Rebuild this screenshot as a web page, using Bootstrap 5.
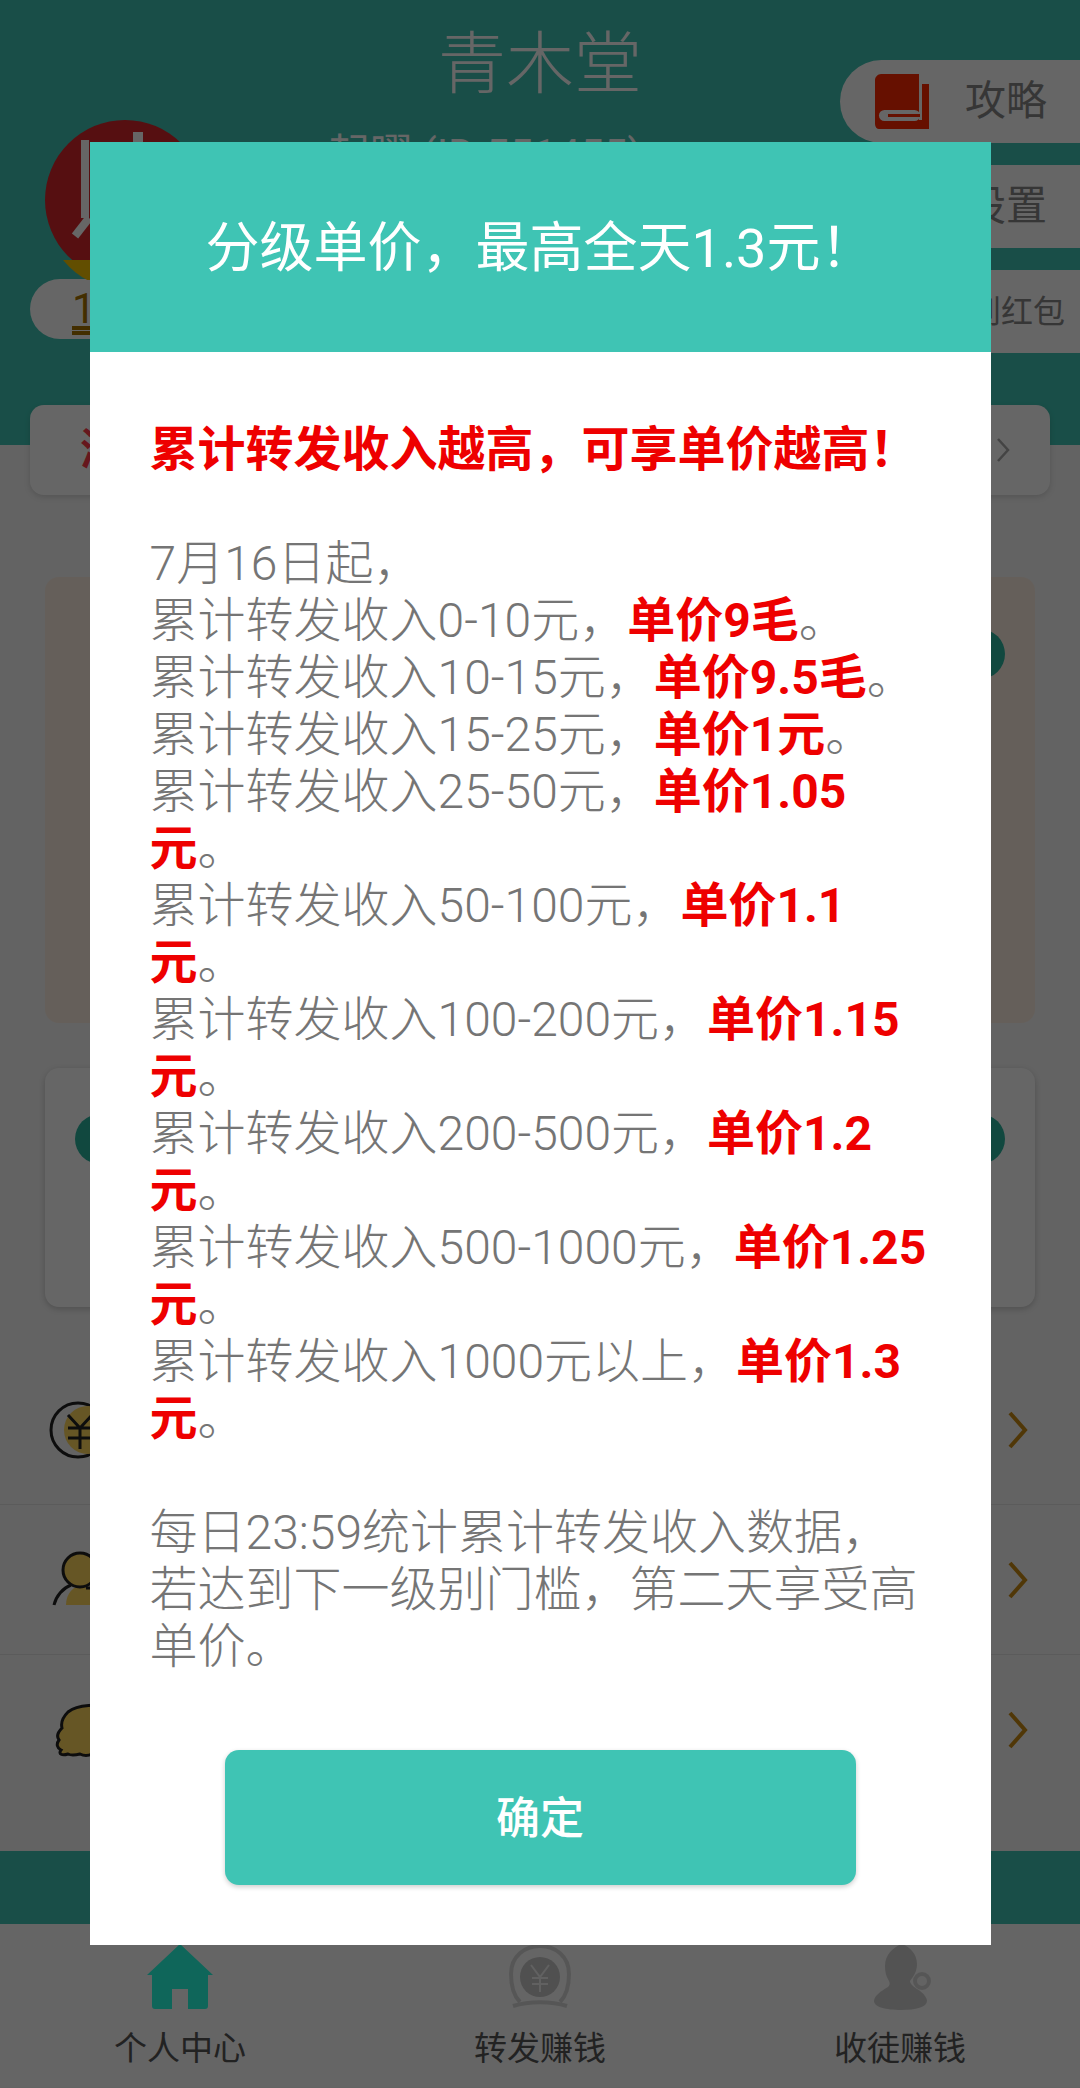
<!DOCTYPE html>
<html lang="zh-CN">
<head>
  <meta charset="UTF-8" />
  <meta name="viewport" content="width=device-width, initial-scale=1.0"/>
  <title>青木堂</title>
  <link href="https://cdn.jsdelivr.net/npm/bootstrap@5.3.3/dist/css/bootstrap.min.css" rel="stylesheet"/>
  <style>
    html, body {
      height: 2088px;
      overflow: hidden;
    }
    body {
      font-family: Roboto, "Noto Sans CJK SC", sans-serif;
      background: #f7f7f7;
      color: #888;
    }
    .app {
      height: 2088px;
    }

    /* top area */
    .top-bar {
      height: 445px;
      background: #3fc4b4;
      display: grid;
      grid-template-columns: 300px 480px 300px;
    }
    .top-left {
      padding: 120px 0 0 30px;
    }
    .avatar {
      display: block;
      width: 160px;
      height: 160px;
      margin-left: 15px;
      margin-bottom: -1px;
    }
    .level-pill {
      width: 200px;
      height: 60px;
      padding-left: 42px;
      background: #fff;
      border-radius: 30px;
      font-size: 42px;
      line-height: 60px;
      color: #a87400;
      text-decoration: underline double;
    }
    .top-mid {
      padding-top: 20px;
      text-align: center;
    }
    .shop-name {
      font-size: 68px;
      font-weight: 300;
      line-height: 90px;
      color: #fff;
    }
    .user-id {
      margin-top: 20px;
      padding-right: 110px;
      font-size: 42px;
      line-height: 50px;
      color: #fff;
      white-space: nowrap;
    }
    .top-right {
      padding-top: 60px;
    }
    .side-pill {
      height: 83px;
      margin-bottom: 22px;
      padding-right: 33px;
      margin-left: 60px;
      background: #fff;
      border-radius: 42px 0 0 42px;
      font-size: 41px;
    }
    .side-pill.tiny {
      font-size: 32px;
      padding-right: 15px;
    }
    .side-pill svg {
      width: 54px;
      height: 55px;
      margin-right: 36px;
    }

    /* content below the top area */
    .notice-bar {
      height: 90px;
      margin: -40px 30px 0;
      padding: 0 40px 0 50px;
      background: #fff;
      border-radius: 14px;
      color: #ff3b4a;
      font-size: 44px;
      font-weight: 700;
      position: relative;
      box-shadow: 0 2px 6px rgba(0, 0, 0, 0.15);
    }
    .panel-one,
    .panel-two {
      margin: 0 45px;
      border-radius: 14px;
    }
    .panel-one {
      height: 446px;
      margin-top: 82px;
      padding: 52px 30px 0;
      background: #fdeee2;
    }
    .panel-two {
      height: 239px;
      margin-top: 45px;
      padding: 46px 30px 0;
      background: #fff;
      box-shadow: 0 2px 6px rgba(0, 0, 0, 0.2);
    }
    .bar-one,
    .bar-two {
      height: 50px;
      border-radius: 25px;
      background: #2bb39f;
    }
    .bar-one {
      margin-left: auto;
      width: 120px;
    }
    .menu-list {
      margin-top: 48px;
    }
    .menu-row {
      height: 150px;
      padding: 0 52px 0 48px;
      border-bottom: 1px solid #e4e4e4;
    }
    .menu-row:last-child {
      border-bottom: 0;
    }
    .menu-row .lead-icon {
      width: 64px;
      height: 64px;
    }
    .menu-row .go-icon {
      width: 20px;
      height: 38px;
    }
    .teal-strip {
      height: 73px;
      margin-top: 46px;
      background: #3fc4b4;
    }

    /* tab bar */
    .tab-bar {
      height: 163px;
      background: #fcfcfc;
    }
    .tab-item {
      width: 360px;
      padding-top: 20px;
      text-align: center;
      font-size: 33px;
      line-height: 44px;
      color: #555;
    }
    .tab-item svg {
      display: block;
      height: 66px;
      width: 66px;
      margin: 0 auto 17px;
    }

    /* dialog */
    .dialog-mask {
      z-index: 10;
      padding-top: 142px;
      background: rgba(0, 0, 0, 0.6);
    }
    .dialog-box {
      width: 901px;
      height: 1803px;
      background: #fff;
    }
    .dialog-head {
      height: 210px;
      padding-top: 3px;
      background: #3fc4b4;
      color: #fff;
      font-size: 54px;
      font-weight: 400;
    }
    .dialog-text {
      padding: 69px 60px 0;
      font-size: 48px;
      line-height: 57px;
      font-weight: 300;
      color: #757575;
    }
    .dialog-text b {
      font-weight: 700;
      color: #ee0000;
    }
    .dialog-foot {
      padding-bottom: 60px;
    }
    .btn-confirm {
      width: 631px;
      height: 135px;
      padding-top: 8px;
      background: #3fc4b4;
      border: 0;
      border-radius: 14px;
      color: #fff;
      font-size: 44px;
      font-weight: 500;
      box-shadow: 0 2px 5px rgba(0, 0, 0, 0.2);
    }
  </style>
</head>
<body>
  <div class="app position-relative d-flex flex-column">

    <!-- top area -->
    <header class="top-bar">
      <div class="top-left">
        <svg class="avatar" viewBox="0 0 160 160">
          <circle cx="80" cy="80" r="80" fill="#d8262b"/>
          <path d="M18 140a80 80 0 0 0 124 0z" fill="#f5c400"/>
          <rect x="36" y="20" width="8" height="78" fill="#fff"/>
          <path d="M44 98L30 116" stroke="#fff" stroke-width="8"/>
          <rect x="88" y="12" width="10" height="12" fill="#fff"/>
        </svg>
        <div class="level-pill">1</div>
      </div>
      <div class="top-mid">
        <div class="shop-name">青木堂</div>
        <div class="user-id">起曜 (ID:551455)</div>
      </div>
      <div class="top-right">
        <div class="side-pill d-flex align-items-center justify-content-end">
          <svg viewBox="0 0 54 55">
            <path fill="#ff2a00" d="M6 0h38v46H0V6c0-3 3-6 6-6zM47 10h7v45H4c-2 0-4-2-4-5v-4h47z"/>
            <rect x="4" y="36" width="41" height="11" rx="5.5" fill="#fff"/>
            <rect x="13" y="40" width="32" height="3" fill="#ff2a00"/>
          </svg>
          攻略
        </div>
        <div class="side-pill d-flex align-items-center justify-content-end">设置</div>
        <div class="side-pill tiny d-flex align-items-center justify-content-end">签到红包</div>
      </div>
    </header>

    <div class="notice-bar d-flex align-items-center justify-content-between">
      <span>滚动</span>
      <svg width="14" height="26" viewBox="0 0 14 26" fill="none" stroke="#aaa" stroke-width="2.5"><path d="M2 2l10 11L2 24"/></svg>
    </div>

    <section class="panel-one">
      <div class="bar-one"></div>
    </section>
    <section class="panel-two">
      <div class="bar-two"></div>
    </section>

    <div class="menu-list">
      <div class="menu-row d-flex align-items-center justify-content-between">
        <svg class="lead-icon" viewBox="0 0 64 64" fill="none" stroke="#222" stroke-width="3">
          <circle cx="30" cy="32" r="27"/>
          <circle cx="40" cy="32" r="24" fill="#ffd65c" stroke="none"/>
          <path d="M20 17l12 13 12-13M32 30v21M20 30h24M20 40h24"/>
        </svg>
        <svg class="go-icon" viewBox="0 0 20 38" fill="none" stroke="#c98a12" stroke-width="4"><path d="M2 2l15 17L2 36"/></svg>
      </div>
      <div class="menu-row d-flex align-items-center justify-content-between">
        <svg class="lead-icon" viewBox="0 0 64 64" fill="none" stroke="#222" stroke-width="3">
          <path d="M18 57c0-12 8-19 15-19s31 2 31 19z" fill="#ffd65c" stroke="none"/>
          <circle cx="32" cy="22" r="17" fill="#ffd65c"/>
          <path d="M6 57c2-9 9-17 17-20M38 40h12"/>
        </svg>
        <svg class="go-icon" viewBox="0 0 20 38" fill="none" stroke="#c98a12" stroke-width="4"><path d="M2 2l15 17L2 36"/></svg>
      </div>
      <div class="menu-row d-flex align-items-center justify-content-between">
        <svg class="lead-icon" viewBox="0 0 64 64" fill="#ffd65c" stroke="#222" stroke-width="3">
          <path d="M64 10C50 6 30 6 20 14c-6 6-7 12-6 16-4 4-6 8-3 12-3 4-2 8 2 10-3 4 1 6 7 4 4 2 8 1 12 0 4 2 8 2 12 0 4 2 10 2 20 0z"/>
        </svg>
        <svg class="go-icon" viewBox="0 0 20 38" fill="none" stroke="#c98a12" stroke-width="4"><path d="M2 2l15 17L2 36"/></svg>
      </div>
    </div>

    <div class="teal-strip"></div>

    <!-- tab bar -->
    <nav class="tab-bar d-flex">
      <div class="tab-item">
        <svg viewBox="0 0 66 66"><path fill="#26ffe1" d="M33 0l33 31h-5v31c0 2-1 3-3 3H41V45H25v20H8c-2 0-3-1-3-3V31H0z"/></svg>
        个人中心
      </div>
      <div class="tab-item">
        <svg viewBox="0 0 66 66" fill="none">
          <path d="M13 58C5 50 4 36 4 30 4 12 18 2 33 2s29 10 29 28c0 6-1 20-9 28" stroke="#d8d8d8" stroke-width="4"/>
          <path d="M6 62c16-5 38-5 54 0" stroke="#d8d8d8" stroke-width="4"/>
          <circle cx="33" cy="33" r="20" fill="#c8c8c8"/>
          <path d="M24 21l9 12 9-12M33 33v15M25 34h16M25 40h16" stroke="#f2f2f2" stroke-width="2"/>
        </svg>
        转发赚钱
      </div>
      <div class="tab-item">
        <svg viewBox="0 0 66 66">
          <path fill="#d0d0d0" d="M35 0c8 3 15 10 15 20 0 7-3 12-7 17 0 3 3 5 7 8 7 4 10 9 10 12 0 6-11 9-26 9S7 63 7 57c0-5 7-10 14-14 2-2 2-4 1-6-3-5-4-9-4-15C18 11 26 3 35 0z"/>
          <circle cx="55" cy="37" r="7" fill="#f7f7f7" stroke="#d8d8d8" stroke-width="4"/>
        </svg>
        收徒赚钱
      </div>
    </nav>

    <!-- price dialog -->
    <div class="dialog-mask position-absolute top-0 start-0 w-100 h-100 d-flex justify-content-center align-items-start">
      <div class="dialog-box d-flex flex-column">
        <div class="dialog-head d-flex align-items-center justify-content-center">分级单价，最高全天1.3元！</div>
        <div class="dialog-text flex-grow-1">
          <b>累计转发收入越高，可享单价越高！</b><br><br>
          7月16日起，<br>
          累计转发收入0-10元，<b>单价9毛</b>。<br>
          累计转发收入10-15元，<b>单价9.5毛</b>。<br>
          累计转发收入15-25元，<b>单价1元</b>。<br>
          累计转发收入25-50元，<b>单价1.05元</b>。<br>
          累计转发收入50-100元，<b>单价1.1元</b>。<br>
          累计转发收入100-200元，<b>单价1.15元</b>。<br>
          累计转发收入200-500元，<b>单价1.2元</b>。<br>
          累计转发收入500-1000元，<b>单价1.25元</b>。<br>
          累计转发收入1000元以上，<b>单价1.3元</b>。<br><br>
          每日23:59统计累计转发收入数据，若达到下一级别门槛，第二天享受高单价。
        </div>
        <div class="dialog-foot text-center">
          <button type="button" class="btn btn-confirm">确定</button>
        </div>
      </div>
    </div>
  </div>

  <script src="https://cdn.jsdelivr.net/npm/bootstrap@5.3.3/dist/js/bootstrap.bundle.min.js"></script>
</body>
</html>
